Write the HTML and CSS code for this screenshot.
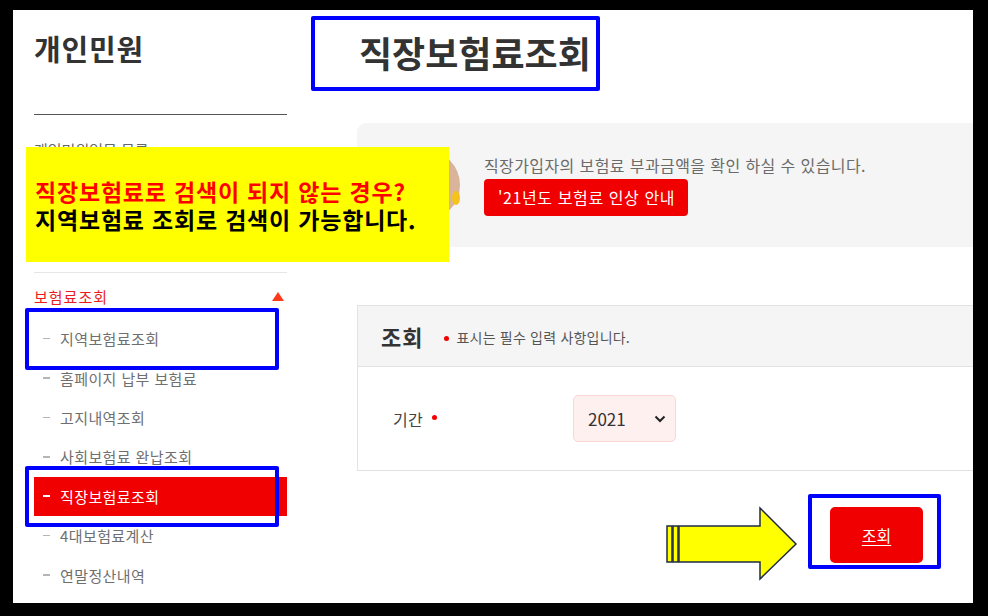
FILE: index.html
```html
<!DOCTYPE html>
<html lang="ko">
<head>
<meta charset="utf-8">
<title>직장보험료조회</title>
<link rel="stylesheet" href="styles.css">
</head>
<body>
<div class="frame">
  <aside class="side">
    <h2 class="side-title">개인민원</h2>
    <ul class="menu-top">
      <li>개인민원업무 목록</li>
    </ul>
    <div class="menu-group">
      <div class="group-head"><span>보험료조회</span><span class="tri"></span></div>
      <ul class="sub">
        <li><span class="dash"></span>지역보험료조회</li>
        <li><span class="dash"></span>홈페이지 납부 보험료</li>
        <li><span class="dash"></span>고지내역조회</li>
        <li><span class="dash"></span>사회보험료 완납조회</li>
        <li class="active"><span class="dash"></span>직장보험료조회</li>
        <li><span class="dash"></span>4대보험료계산</li>
        <li><span class="dash"></span>연말정산내역</li>
      </ul>
    </div>
  </aside>

  <main class="main">
    <h1 class="page-title">직장보험료조회</h1>
    <section class="info">
      <svg class="info-ico" width="70" height="70" viewBox="0 0 70 70">
        <circle cx="35" cy="35" r="35" fill="#d9b49a"/>
        <ellipse cx="66" cy="48" rx="4" ry="7" fill="#f6c21c"/>
      </svg>
      <div class="info-body">
        <p class="info-text">직장가입자의 보험료 부과금액을 확인 하실 수 있습니다.</p>
        <a class="btn-red">'21년도 보험료 인상 안내</a>
      </div>
    </section>

    <section class="form">
      <div class="form-head">
        <h3 class="form-title">조회</h3>
        <span class="req-dot"></span>
        <span class="note">표시는 필수 입력 사항입니다.</span>
      </div>
      <div class="form-row">
        <span class="label">기간<span class="req-dot"></span></span>
        <div class="select">
          <span>2021</span>
          <svg width="12" height="8" viewBox="0 0 12 8"><path d="M1.5 1.5 L6 6 L10.5 1.5" fill="none" stroke="#222" stroke-width="2"/></svg>
        </div>
      </div>
    </section>

    <div class="actions"><button class="btn-search">조회</button></div>
  </main>

  <div class="mark mark-title"></div>
  <div class="mark mark-local"></div>
  <div class="mark mark-work"></div>
  <div class="mark mark-btn"></div>

  <div class="callout">
    <p class="callout-red">직장보험료로 검색이 되지 않는 경우?</p>
    <p class="callout-black">지역보험료 조회로 검색이 가능합니다.</p>
  </div>

  <svg class="arrow" width="134" height="76" viewBox="665 506 134 76">
    <rect x="667" y="526" width="5" height="36" fill="#ffff00" stroke="#1f2b47" stroke-width="1.5"/>
    <rect x="673" y="526" width="5" height="36" fill="#ffff00" stroke="#1f2b47" stroke-width="1.5"/>
    <path d="M679 526 H760 V508 L796 544 L760 579 V562 H679 Z" fill="#ffff00" stroke="#1f2b47" stroke-width="1.5" stroke-linejoin="miter"/>
  </svg>
</div>
</body>
</html>
```

FILE: styles.css
```css
* { box-sizing: border-box; }
html, body { margin: 0; padding: 0; }
body {
  background: #000;
  width: 988px;
  height: 616px;
  overflow: hidden;
  font-family: "Noto Sans CJK KR", "Noto Sans", sans-serif;
}
.frame {
  position: relative;
  margin: 10px 0 0 13px;
  width: 960px;
  height: 593px;
  background: #fff;
  overflow: hidden;
  display: flex;
}

/* sidebar */
.side {
  flex: 0 0 274px;
  padding: 18px 0 0 21px;
}
.side-title {
  margin: 0;
  font-size: 29px;
  line-height: 40px;
  font-weight: 700;
  letter-spacing: 0.8px;
  color: #333;
  padding-bottom: 46px;
  border-bottom: 1px solid #555;
}
.menu-top {
  list-style: none;
  margin: 0;
  padding: 15px 0 102px;
}
.menu-top li {
  height: 40px;
  line-height: 40px;
  font-size: 15px;
  color: #666;
  letter-spacing: 0;
}
.menu-group {
  border-top: 1px solid #e6e6e6;
  padding-top: 9px;
}
.group-head {
  display: flex;
  justify-content: space-between;
  align-items: center;
  height: 28px;
  font-size: 15px;
  color: #ea1c1c;
  letter-spacing: 1px;
}
.tri {
  width: 0;
  height: 0;
  border-left: 6px solid transparent;
  border-right: 6px solid transparent;
  border-bottom: 9px solid #ff3a1a;
  margin-right: 3px;
}
.sub {
  list-style: none;
  margin: 9px 0 0;
  padding: 0;
}
.sub li {
  height: 39.4px;
  display: flex;
  align-items: center;
  padding-left: 9px;
  font-size: 15px;
  color: #6f6f6f;
  letter-spacing: 0.4px;
}
.dash {
  width: 7px;
  height: 1.5px;
  background: #b5b5b5;
  margin-right: 10px;
}
.sub li.active {
  background: #f00000;
  color: #fff;
}
.sub li.active .dash {
  background: #fff;
  height: 2px;
}

/* main */
.main {
  flex: 0 0 auto;
  margin-left: 70px;
  padding-top: 17px;
  width: 720px;
}
.page-title {
  margin: 0;
  padding-left: 2px;
  font-size: 36px;
  line-height: 50px;
  font-weight: 700;
  letter-spacing: 0;
  color: #333;
}
.info {
  margin-top: 46px;
  height: 124px;
  background: #f5f5f5;
  border-radius: 9px 0 0 9px;
  display: flex;
  align-items: center;
  padding-left: 33px;
  gap: 24px;
}
.info-ico { flex: 0 0 70px; }
.info-body { display: flex; flex-direction: column; align-items: flex-start; }
.info-text {
  margin: 0;
  font-size: 16px;
  line-height: 22px;
  color: #6b6b6b;
  letter-spacing: 0.4px;
}
.btn-red {
  margin-top: 3px;
  display: block;
  width: 204px;
  height: 37px;
  line-height: 36px;
  background: #f00000;
  color: #fff;
  border-radius: 4px;
  font-size: 16px;
  padding-left: 14px;
  letter-spacing: 0.6px;
}

.form {
  margin-top: 58px;
  border: 1px solid #e2e2e2;
  border-right: none;
}
.form-head {
  height: 61px;
  background: #f5f5f5;
  border-bottom: 1px solid #e2e2e2;
  display: flex;
  align-items: center;
  padding-left: 23px;
}
.form-title {
  margin: 0;
  font-size: 22px;
  font-weight: 700;
  color: #333;
  letter-spacing: 1px;
}
.req-dot {
  display: inline-block;
  width: 5px;
  height: 5px;
  border-radius: 50%;
  background: #f00000;
}
.form-head .req-dot { margin: 4px 7px 0 21px; }
.note {
  font-size: 14px;
  color: #555;
  letter-spacing: 0.2px;
  margin-top: 2px;
}
.form-row {
  height: 103px;
  display: flex;
  align-items: center;
  padding-left: 35px;
}
.label {
  width: 180px;
  font-size: 16px;
  color: #444;
  letter-spacing: 0.3px;
  display: flex;
  align-items: center;
}
.label .req-dot { margin: 0 0 2px 9px; }
.select {
  width: 103px;
  height: 47px;
  border: 1px solid #fbd6d6;
  background: #fff0f0;
  border-radius: 5px;
  display: flex;
  align-items: center;
  justify-content: space-between;
  padding: 0 9px 0 14px;
  font-size: 17px;
  color: #333;
}

.actions {
  margin-top: 36px;
  padding-left: 473px;
}
.btn-search {
  width: 93px;
  height: 56px;
  border: none;
  border-radius: 5px;
  background: #f00000;
  color: #fff;
  font-family: inherit;
  font-size: 16px;
  text-decoration: underline;
  text-underline-offset: 3px;
}

/* annotation overlays */
.mark {
  position: absolute;
  border: 4px solid #0000ff;
  border-radius: 2px;
}
.mark-title { left: 298px; top: 6px; width: 289px; height: 75px; }
.mark-local { left: 12px; top: 298px; width: 254px; height: 62px; }
.mark-work { left: 12px; top: 456px; width: 254px; height: 61px; }
.mark-btn { left: 795px; top: 484px; width: 133px; height: 75px; }

.callout {
  position: absolute;
  left: 13px;
  top: 137px;
  width: 423px;
  height: 115px;
  background: #ffff00;
  padding-left: 9px;
  display: flex;
  flex-direction: column;
  justify-content: center;
}
.callout p {
  margin: 0;
  font-size: 23px;
  line-height: 28px;
  font-weight: 700;
  letter-spacing: 0.8px;
  white-space: nowrap;
}
.callout-red { color: #ff0000; }
.callout-black { color: #000; }

.arrow {
  position: absolute;
  left: 652px;
  top: 496px;
}
```
